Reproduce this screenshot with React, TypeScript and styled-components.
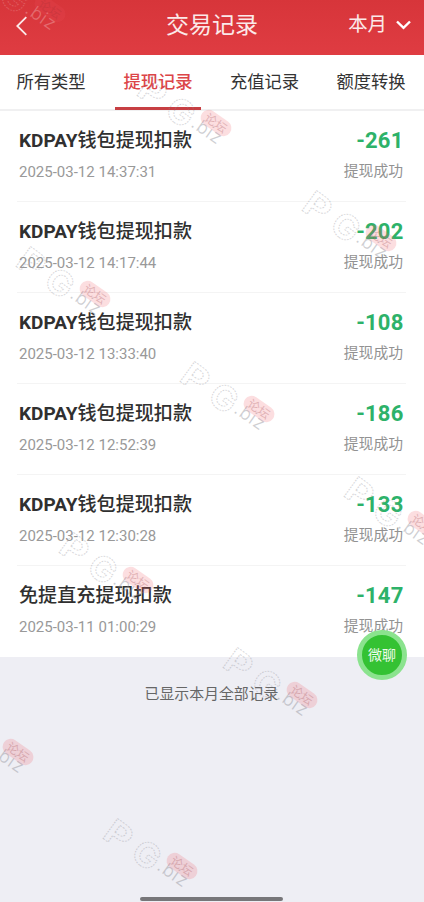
import React from "react";
import styled, { createGlobalStyle } from "styled-components";

const GlobalStyle = createGlobalStyle`
  * { box-sizing: border-box; }
  body { margin: 0; background: #eeeef4; }
`;

const Screen = styled.div`
  position: relative;
  width: 424px;
  height: 902px;
  overflow: hidden;
  display: flex;
  flex-direction: column;
  background: #eeeef4;
  color: #333;
  font-family: Roboto, "Noto Sans CJK SC", sans-serif;
`;

const Header = styled.header`
  flex: none;
  height: 55px;
  display: grid;
  grid-template-columns: 100px 1fr 101px;
  align-items: center;
  padding: 0 13px 4px 14px;
  color: #fbe9e9;
  background: linear-gradient(#d7353a, #df3c42);
`;

const Title = styled.h1`
  margin: 0;
  text-align: center;
  font-size: 23px;
  line-height: 34px;
  font-weight: 400;
`;

const BackButton = styled.button`
  display: flex;
  width: 16px;
  padding: 0;
  border: 0;
  background: none;
  color: inherit;
`;

const Period = styled.div`
  display: flex;
  align-items: center;
  justify-content: flex-end;
  gap: 9px;
  padding-bottom: 2px;
  font-size: 19.4px;
  line-height: 28px;
`;

const Tabs = styled.nav`
  flex: none;
  height: 56px;
  display: grid;
  grid-template-columns: 102px 112px 101px 112px;
  background: #fff;
  border-bottom: 2px solid #f0f0f1;
`;

const Tab = styled.div<{ $active?: boolean }>`
  display: flex;
  justify-content: center;
  font-size: 17.3px;
  line-height: 25px;
  padding-top: 15px;
  color: ${(p) => (p.$active ? "#dc4548" : "#333")};
  font-weight: ${(p) => (p.$active ? 500 : 400)};
`;

const TabLabel = styled.span<{ $active?: boolean }>`
  height: 40px;
  padding: 0 8px;
  border-bottom: 3px solid ${(p) => (p.$active ? "#c73f43" : "transparent")};
  white-space: nowrap;
`;

const List = styled.main`
  flex: none;
  height: 546px;
  padding: 0 18px 0 17px;
  background: #fff;
`;

const Row = styled.section`
  height: 91px;
  display: flex;
  justify-content: space-between;
  padding: 15px 3px 0 2px;
  border-bottom: 1px solid #f4f4f4;
  &:last-child { border-bottom: 0; }
`;

const Column = styled.div<{ $end?: boolean }>`
  display: flex;
  flex-direction: column;
  align-items: ${(p) => (p.$end ? "flex-end" : "flex-start")};
`;

const Name = styled.div`
  padding-top: 1px;
  font-size: 19.1px;
  line-height: 28px;
  font-weight: 500;
  color: #303030;
`;

const Latin = styled.span`
  font-weight: 700;
  font-size: 19px;
`;

const Time = styled.div`
  margin-top: 6px;
  font-size: 15px;
  line-height: 22px;
  color: #999;
`;

const Amount = styled.div`
  font-size: 22px;
  line-height: 29px;
  font-weight: 700;
  letter-spacing: 0.2px;
  margin-right: -0.5px;
  color: #2db269;
`;

const Status = styled.div`
  margin-top: 5px;
  font-size: 14.8px;
  line-height: 22px;
  color: #929292;
`;

const Footer = styled.footer`
  flex: 1;
  display: flex;
  flex-direction: column;
  justify-content: space-between;
  align-items: center;
  padding: 26px 1px 1px 0;
  font-size: 14.9px;
  line-height: 23px;
  color: #666;
`;

const HomeBar = styled.div`
  width: 143px;
  height: 4px;
  border-radius: 2px;
  background: #777679;
`;

const ChatButton = styled.button`
  position: absolute;
  left: 357px;
  top: 630px;
  width: 50px;
  height: 50px;
  display: flex;
  align-items: center;
  justify-content: center;
  padding: 0 0 1px;
  border: 5px solid #8be38e;
  border-radius: 50%;
  background: #34c233;
  color: #eefbed;
  font: 14px/20px Roboto, "Noto Sans CJK SC", sans-serif;
`;

const MarkLayer = styled.svg`
  position: absolute;
  inset: 0;
  pointer-events: none;
`;

const records = [
  ["KDPAY", "钱包提现扣款", "2025-03-12 14:37:31", "-261"],
  ["KDPAY", "钱包提现扣款", "2025-03-12 14:17:44", "-202"],
  ["KDPAY", "钱包提现扣款", "2025-03-12 13:33:40", "-108"],
  ["KDPAY", "钱包提现扣款", "2025-03-12 12:52:39", "-186"],
  ["KDPAY", "钱包提现扣款", "2025-03-12 12:30:28", "-133"],
  ["", "免提直充提现扣款", "2025-03-11 01:00:29", "-147"],
];

const tabs = ["所有类型", "提现记录", "充值记录", "额度转换"];

const marks = [
  [50, 9], [216, 123], [381, 238], [95, 294], [259, 409],
  [423, 524], [138, 580], [302, 695], [18, 752], [182, 866],
];

function Mark({ x, y }: { x: number; y: number }) {
  const onRed = y < 50;
  const ink = onRed ? "#eea0a2" : "#8c8c94";
  const showP = x > 60;
  const showG = x > 30;
  return (
    <g transform={`translate(${x} ${y})`}>
      <g
        fill="none"
        stroke={ink}
        strokeWidth="0.9"
        strokeDasharray="1.6 1.2"
        opacity="0.36"
        fontFamily="Inter"
        fontWeight="700"
        fontSize="34"
      >
        {showP && <text transform="translate(-81 -29) rotate(36) scale(1.18 1)">P</text>}
        {showG && <text transform="translate(-53 -9) rotate(36) scale(1.04 1)">G</text>}
      </g>
      <text
        transform="translate(-26 3) rotate(35)"
        fontFamily="Inter"
        fontWeight="300"
        fontSize="18"
        letterSpacing="0.9"
        fill={ink}
        opacity={onRed ? 0.5 : 0.42}
      >
        .biz
      </text>
      <g transform="rotate(35)">
        <rect x="-17" y="-8" width="34" height="16" rx="8" fill="#f25962" opacity={onRed ? 0.15 : 0.2} />
        <text
          y="4.5"
          textAnchor="middle"
          fontFamily="Noto Sans CJK SC"
          fontSize="12"
          fill={onRed ? "#ad3036" : "#a65259"}
          opacity="0.32"
        >
          论坛
        </text>
      </g>
    </g>
  );
}

export default function App() {
  return (
    <Screen>
      <GlobalStyle />
      <Header>
        <BackButton aria-label="返回">
          <svg width="16" height="20" viewBox="0 0 16 20" fill="none" stroke="currentColor" strokeWidth="1.8">
            <path d="M12.3 1.2 3.3 10l9 8.8" />
          </svg>
        </BackButton>
        <Title>交易记录</Title>
        <Period>
          本月
          <svg width="15" height="10" viewBox="0 0 15 10" fill="none" stroke="#fff" strokeWidth="2.4">
            <path d="m1 1.5 6.5 6.4L14 1.5" />
          </svg>
        </Period>
      </Header>
      <Tabs>
        {tabs.map((tab, i) => (
          <Tab key={tab} $active={i === 1}>
            <TabLabel $active={i === 1}>{tab}</TabLabel>
          </Tab>
        ))}
      </Tabs>
      <List>
        {records.map(([latin, name, time, amount]) => (
          <Row key={time}>
            <Column>
              <Name>
                {latin && <Latin>{latin}</Latin>}
                {name}
              </Name>
              <Time>{time}</Time>
            </Column>
            <Column $end>
              <Amount>{amount}</Amount>
              <Status>提现成功</Status>
            </Column>
          </Row>
        ))}
      </List>
      <Footer>
        <span>已显示本月全部记录</span>
        <HomeBar />
      </Footer>
      <MarkLayer width="424" height="902" viewBox="0 0 424 902">
        {marks.map(([x, y]) => (
          <Mark key={`${x}-${y}`} x={x} y={y} />
        ))}
      </MarkLayer>
      <ChatButton>微聊</ChatButton>
    </Screen>
  );
}
